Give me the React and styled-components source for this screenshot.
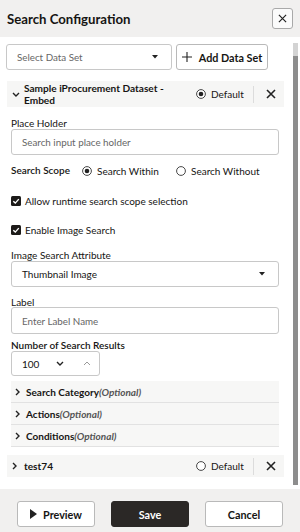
import React from "react";
import styled, { createGlobalStyle } from "styled-components";

const Global = createGlobalStyle`
  html, body { margin: 0; padding: 0; }
  body { font-family: Lato, "Noto Sans", sans-serif; color: #161513; background: #fff; }
  * { box-sizing: border-box; }
`;

const Page = styled.div`
  width: 300px;
  height: 532px;
  display: flex;
  flex-direction: column;
  overflow: hidden;
`;

const Header = styled.div`
  height: 37px;
  flex: none;
  background: #f1f0ef;
  display: flex;
  align-items: center;
  justify-content: space-between;
  padding: 0 7px 0 7px;
`;

const Title = styled.div`
  font-size: 13.2px;
  font-weight: 700;
`;

const IconBox = styled.button`
  width: 21px;
  height: 21px;
  border: 1px solid #a9a9a9;
  border-radius: 3px;
  background: #fbfbfb;
  display: flex;
  align-items: center;
  justify-content: center;
  padding: 0;
`;

const Body = styled.div`
  flex: 1;
  display: flex;
  min-height: 0;
`;

const Main = styled.div`
  width: 287px;
  padding: 7px 0 0 6px;
  display: flex;
  flex-direction: column;
`;

const ScrollCol = styled.div`
  width: 13px;
  padding: 6px 2px 4px 6px;
  display: flex;
  flex-direction: column;
`;

const Track = styled.div`
  height: 13px;
  background: #d3d3d3;
`;
const Thumb = styled.div`
  flex: 1;
  background: #8d8d8d;
`;

const TopRow = styled.div`
  display: flex;
  gap: 4px;
  height: 26px;
`;

const Select = styled.div`
  width: ${(p) => p.$w || "166px"};
  height: 26px;
  border: 1px solid #c8c8c8;
  border-radius: 3px;
  display: flex;
  align-items: center;
  justify-content: space-between;
  padding: 0 13px 0 10px;
  font-size: ${(p) => (p.$filled ? "10px" : "9.8px")};
  color: ${(p) => (p.$filled ? "#161513" : "#666")};
  background: #fff;
`;

const Button = styled.button`
  width: ${(p) => p.$w || "78px"};
  height: 26px;
  border: 1px solid ${(p) => (p.$primary ? "#2b2826" : "#b9b9b9")};
  border-radius: 3px;
  background: ${(p) => (p.$primary ? "#2b2826" : "#fff")};
  color: ${(p) => (p.$primary ? "#fff" : "#161513")};
  font-family: inherit;
  font-size: 10.8px;
  font-weight: 700;
  display: flex;
  align-items: center;
  justify-content: center;
  gap: ${(p) => p.$gap || "6px"};
  padding: 0;
`;

const GroupHeader = styled.div`
  margin-top: ${(p) => p.$mt || "11px"};
  width: 277px;
  margin-left: 1px;
  height: ${(p) => p.$h || "26px"};
  background: #f6f6f5;
  display: flex;
  align-items: center;
  padding: 0 0 0 5px;
`;

const Chevron = styled.div`
  width: 12px;
  display: flex;
  align-items: center;
  flex: none;
`;

const GroupTitle = styled.div`
  flex: 1;
  font-size: 10.1px;
  font-weight: 700;
  line-height: 12px;
`;

const RadioLabel = styled.label`
  display: flex;
  align-items: center;
  gap: 5px;
  font-size: 10px;
  width: ${(p) => p.$w || "auto"};
`;

const Divider = styled.div`
  width: 1px;
  height: 17px;
  background: #dcdcdc;
  margin: 0 3px 0 0;
`;

const XBtn = styled.div`
  width: 27px;
  display: flex;
  align-items: center;
  justify-content: center;
`;

const Section = styled.div`
  padding-left: 5px;
  width: 273px;
  display: flex;
  flex-direction: column;
`;

const Label = styled.div`
  font-size: 10px;
  margin-top: ${(p) => p.$mt || "10px"};
  margin-bottom: ${(p) => p.$mb || "1px"};
  font-weight: ${(p) => (p.$bold ? 600 : 400)};
  line-height: 10px;
`;

const Input = styled.div`
  width: 268px;
  height: ${(p) => p.$h || "26px"};
  border: 1px solid #c8c8c8;
  border-radius: 3px;
  display: flex;
  align-items: center;
  padding-left: 10px;
  font-size: 9.8px;
  color: #666;
`;

const ScopeRow = styled.div`
  display: flex;
  align-items: center;
  margin-top: 9px;
  height: 14px;
`;

const ScopeLabel = styled.div`
  font-size: 10px;
  font-weight: 600;
  width: 71px;
  margin-top: -3px;
`;

const CheckRow = styled.div`
  display: flex;
  align-items: center;
  gap: 4px;
  font-size: 10px;
  margin-top: 17px;
  height: 12px;
`;

const Box = styled.div`
  width: 10px;
  height: 10px;
  border-radius: 1.5px;
  background: #1d1b19;
  display: flex;
  align-items: center;
  justify-content: center;
`;

const NumberBox = styled.div`
  width: 89px;
  height: 25px;
  border: 1px solid #c8c8c8;
  border-radius: 3px;
  display: flex;
  align-items: center;
  padding-left: 10px;
  font-size: 10px;
`;

const NumVal = styled.span`
  width: 34px;
`;

const NumGap = styled.span`
  width: 19px;
`;

const Accordion = styled.div`
  margin-top: 5px;
  width: 268px;
  display: flex;
  flex-direction: column;
  background: #f7f7f6;
`;

const AccRow = styled.div`
  height: 22px;
  display: flex;
  align-items: center;
  padding-left: 4px;
  border-bottom: 1px solid #e2e2e2;
  font-size: 10px;
  font-weight: 700;
  gap: 6px;
`;

const Optional = styled.span`
  font-style: italic;
  color: #555;
  font-weight: 700;
  font-size: 10px;
`;

const Footer = styled.div`
  height: 43px;
  flex: none;
  background: #f1f0ef;
  display: flex;
  align-items: flex-start;
  padding: 12px 0 0 17px;
  gap: 16px;
`;

const Caret = () => (
  <svg width="6" height="4" viewBox="0 0 6 4"><path d="M0 0h6L3 3.5z" fill="#222" /></svg>
);

const ChevDown = ({ c = "#222" }) => (
  <svg width="8" height="5" viewBox="0 0 8 5"><path d="M1 1l3 3 3-3" stroke={c} strokeWidth="1.4" fill="none" /></svg>
);
const ChevUp = ({ c = "#999" }) => (
  <svg width="8" height="5" viewBox="0 0 8 5"><path d="M1 4l3-3 3 3" stroke={c} strokeWidth="1" fill="none" /></svg>
);
const ChevRight = () => (
  <svg width="5" height="8" viewBox="0 0 5 8"><path d="M1 1l3 3-3 3" stroke="#222" strokeWidth="1.4" fill="none" /></svg>
);

const Cross = ({ s = 10, w = 1.6 }) => (
  <svg width={s} height={s} viewBox="0 0 10 10"><path d="M1 1l8 8M9 1l-8 8" stroke="#222" strokeWidth={w} /></svg>
);

const Radio = ({ on }) => (
  <svg width="10" height="10" viewBox="0 0 10 10">
    <circle cx="5" cy="5" r="4.4" fill="#fff" stroke="#333" strokeWidth="0.9" />
    {on && <circle cx="5" cy="5" r="2.3" fill="#222" />}
  </svg>
);

const Check = () => (
  <svg width="8" height="8" viewBox="0 0 8 8"><path d="M1.3 4.2l2 1.9 3.5-4" stroke="#fff" strokeWidth="1.4" fill="none" /></svg>
);

const Plus = () => (
  <svg width="10" height="10" viewBox="0 0 10 10"><path d="M5 0v10M0 5h10" stroke="#222" strokeWidth="1.1" /></svg>
);

const Play = () => (
  <svg width="7" height="10" viewBox="0 0 7 10"><path d="M0 0l7 5-7 5z" fill="#222" /></svg>
);

export default function App() {
  return (
    <Page>
      <Global />
      <Header>
        <Title>Search Configuration</Title>
        <IconBox><Cross s={9} w={1.3} /></IconBox>
      </Header>
      <Body>
        <Main>
          <TopRow>
            <Select>Select Data Set<Caret /></Select>
            <Button $w="92px" $gap="7px"><Plus />Add Data Set</Button>
          </TopRow>

          <GroupHeader>
            <Chevron><ChevDown /></Chevron>
            <GroupTitle>Sample iProcurement Dataset -<br />Embed</GroupTitle>
            <RadioLabel $w="57px"><Radio on />Default</RadioLabel>
            <Divider />
            <XBtn><Cross /></XBtn>
          </GroupHeader>

          <Section>
            <Label $mt="11px">Place Holder</Label>
            <Input>Search input place holder</Input>

            <ScopeRow>
              <ScopeLabel>Search Scope</ScopeLabel>
              <RadioLabel $w="94px"><Radio on />Search Within</RadioLabel>
              <RadioLabel><Radio />Search Without</RadioLabel>
            </ScopeRow>

            <CheckRow><Box><Check /></Box>Allow runtime search scope selection</CheckRow>
            <CheckRow><Box><Check /></Box>Enable Image Search</CheckRow>

            <Label $mt="14px">Image Search Attribute</Label>
            <Select $w="268px" $filled>Thumbnail Image<Caret /></Select>

            <Label $mt="10px" $mb="0px">Label</Label>
            <Input $h="27px">Enter Label Name</Input>

            <Label $mt="6px" $bold>Number of Search Results</Label>
            <NumberBox>
              <NumVal>100</NumVal>
              <ChevDown />
              <NumGap />
              <ChevUp />
            </NumberBox>

            <Accordion>
              <AccRow><ChevRight /><span>Search Category<Optional>(Optional)</Optional></span></AccRow>
              <AccRow><ChevRight /><span>Actions<Optional>(Optional)</Optional></span></AccRow>
              <AccRow><ChevRight /><span>Conditions<Optional>(Optional)</Optional></span></AccRow>
            </Accordion>
          </Section>

          <GroupHeader $mt="8px" $h="22px">
            <Chevron><ChevRight /></Chevron>
            <GroupTitle>test74</GroupTitle>
            <RadioLabel $w="57px"><Radio />Default</RadioLabel>
            <Divider />
            <XBtn><Cross /></XBtn>
          </GroupHeader>
        </Main>
        <ScrollCol>
          <Track />
          <Thumb />
        </ScrollCol>
      </Body>
      <Footer>
        <Button><Play />Preview</Button>
        <Button $primary>Save</Button>
        <Button>Cancel</Button>
      </Footer>
    </Page>
  );
}
